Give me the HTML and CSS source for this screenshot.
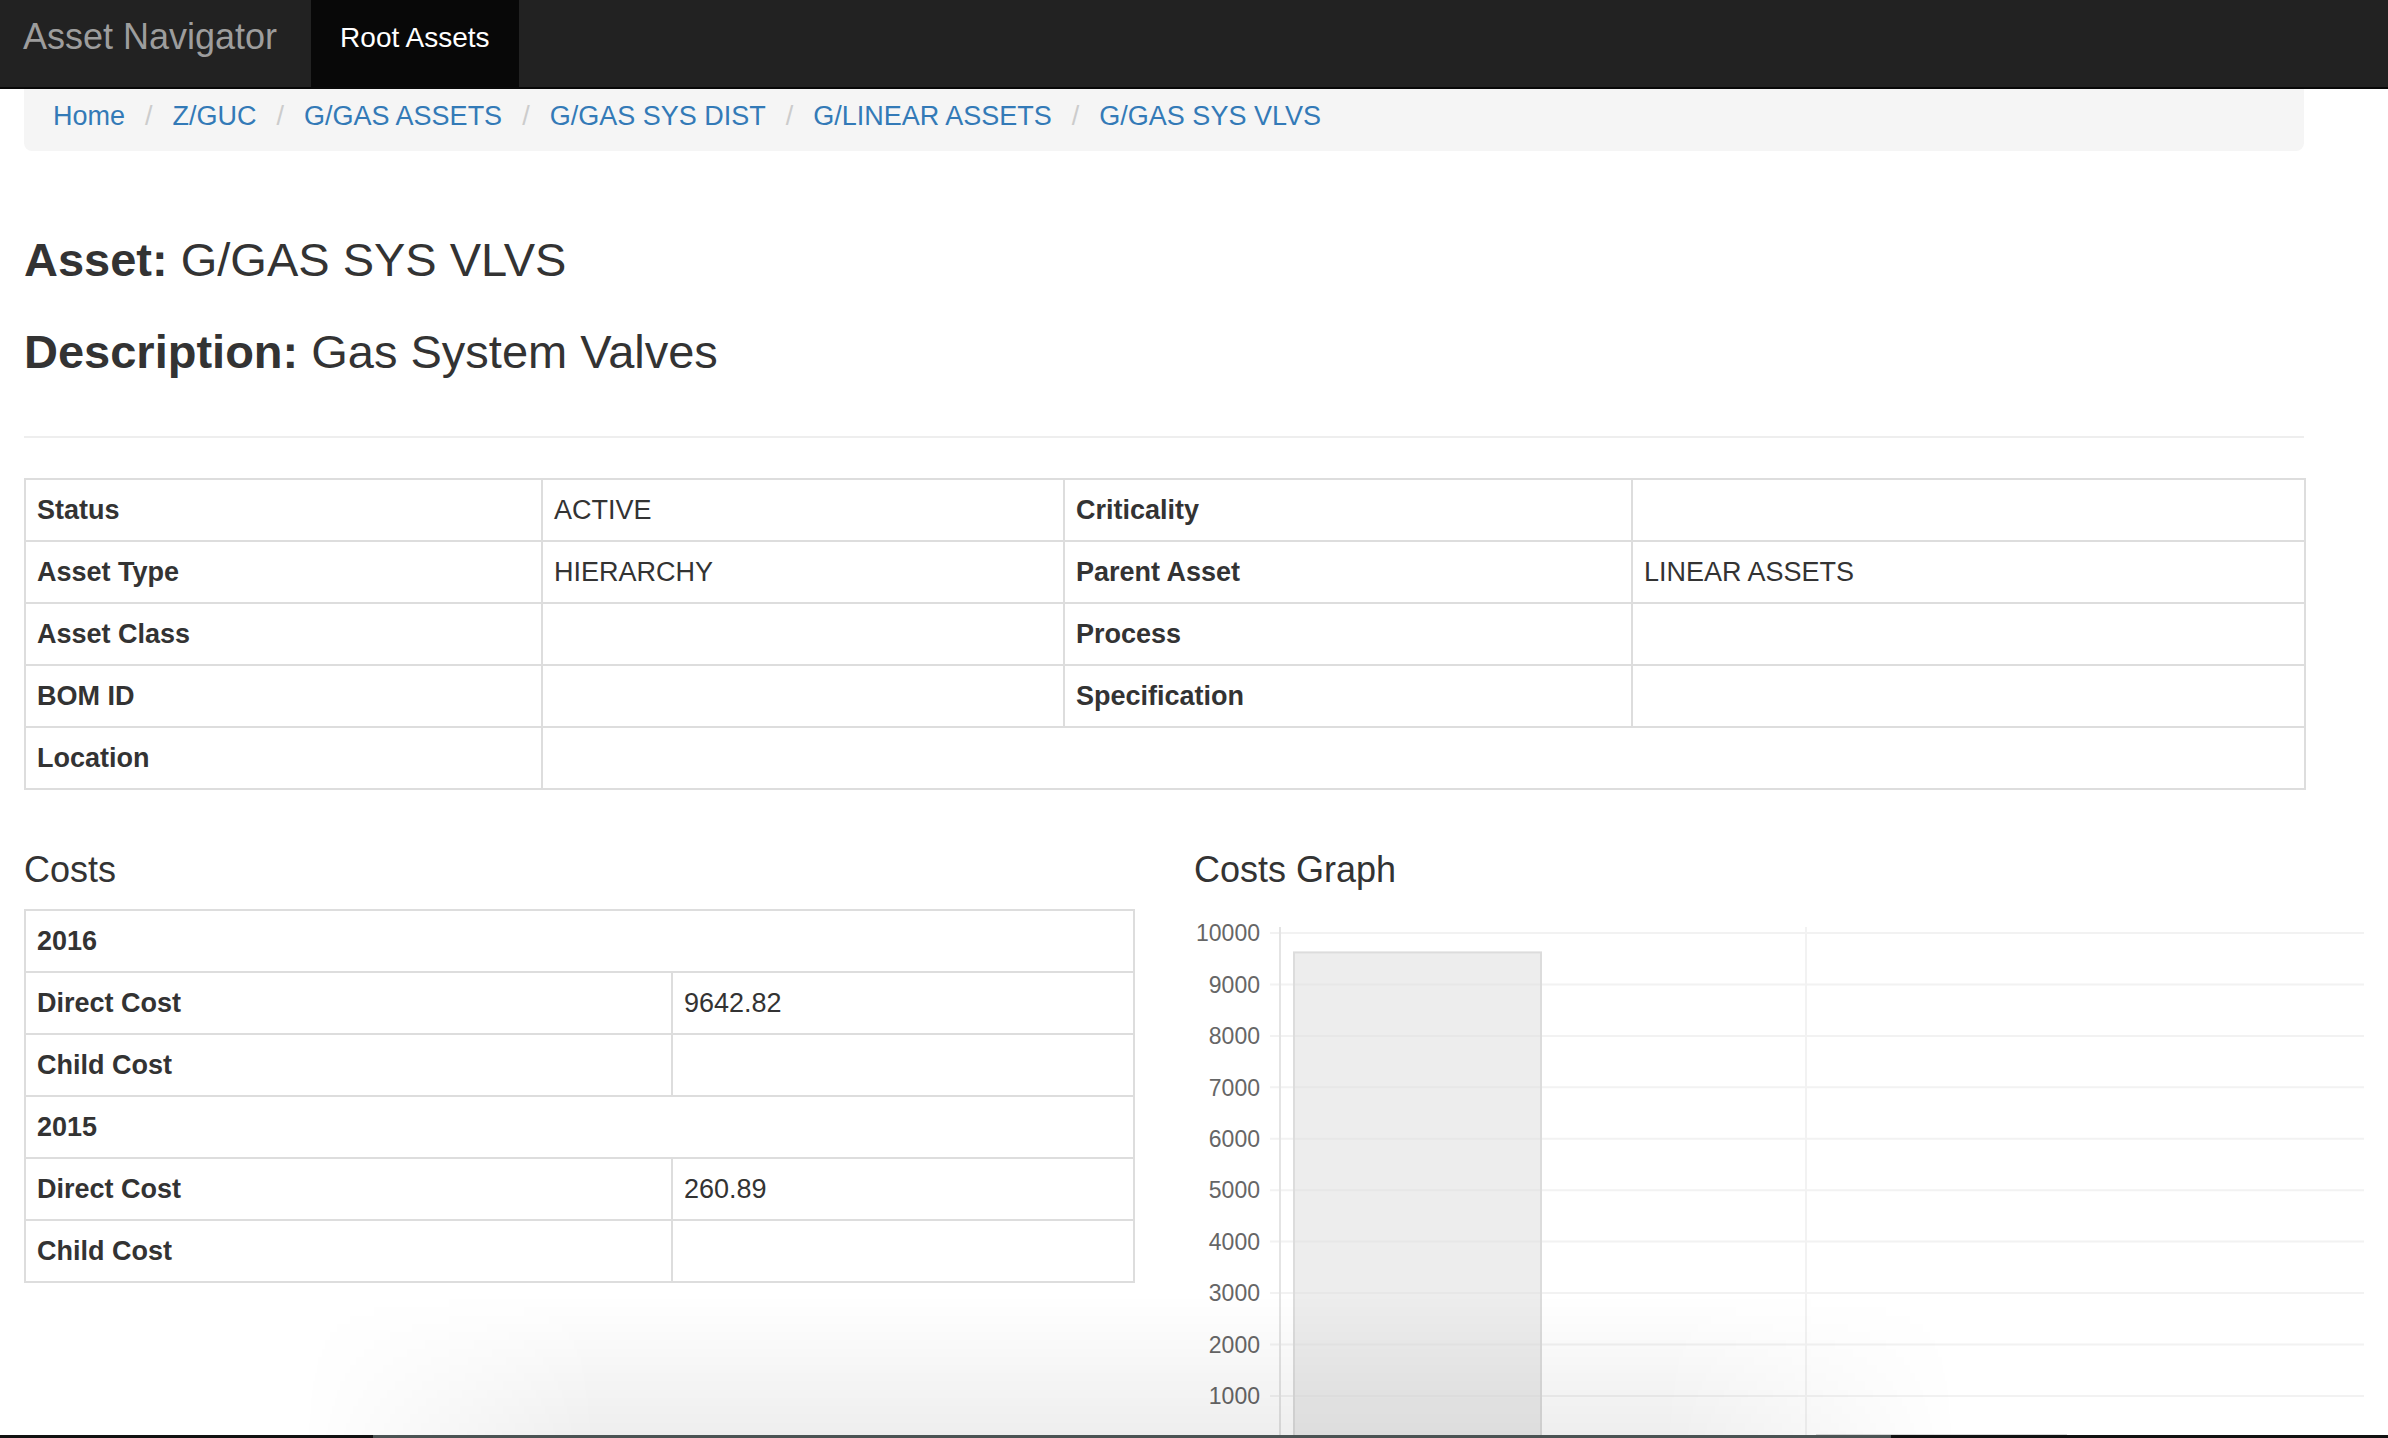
FILE: index.html
```html
<!DOCTYPE html>
<html lang="en">
<head>
<meta charset="utf-8">
<title>Asset Navigator</title>
<link rel="stylesheet" href="styles.css">
</head>
<body>
<nav class="navbar">
  <a class="brand" href="#">Asset Navigator</a>
  <a class="nav-link active" href="#">Root Assets</a>
</nav>
<div class="container">
  <ol class="breadcrumb">
    <li><a href="#">Home</a></li>
    <li><a href="#">Z/GUC</a></li>
    <li><a href="#">G/GAS ASSETS</a></li>
    <li><a href="#">G/GAS SYS DIST</a></li>
    <li><a href="#">G/LINEAR ASSETS</a></li>
    <li><a href="#">G/GAS SYS VLVS</a></li>
  </ol>

  <h3 class="heading heading-asset"><b>Asset:</b> G/GAS SYS VLVS</h3>
  <h3 class="heading heading-desc"><b>Description:</b> Gas System Valves</h3>
  <hr class="divider">

  <table class="grid-table info-table">
    <colgroup>
      <col class="c1"><col class="c2"><col class="c3"><col class="c4">
    </colgroup>
    <tbody>
      <tr><th>Status</th><td>ACTIVE</td><th>Criticality</th><td></td></tr>
      <tr><th>Asset Type</th><td>HIERARCHY</td><th>Parent Asset</th><td>LINEAR ASSETS</td></tr>
      <tr><th>Asset Class</th><td></td><th>Process</th><td></td></tr>
      <tr><th>BOM ID</th><td></td><th>Specification</th><td></td></tr>
      <tr><th>Location</th><td colspan="3"></td></tr>
    </tbody>
  </table>

  <div class="costs-row">
    <section class="costs-col">
      <h4 class="section-title">Costs</h4>
      <table class="grid-table costs-table">
        <colgroup><col class="k1"><col class="k2"></colgroup>
        <tbody>
          <tr><th colspan="2">2016</th></tr>
          <tr><th>Direct Cost</th><td>9642.82</td></tr>
          <tr><th>Child Cost</th><td></td></tr>
          <tr><th colspan="2">2015</th></tr>
          <tr><th>Direct Cost</th><td>260.89</td></tr>
          <tr><th>Child Cost</th><td></td></tr>
        </tbody>
      </table>
    </section>
    <section class="graph-col">
      <h4 class="section-title">Costs Graph</h4>
      <svg class="chart" width="1170" height="560" viewBox="0 0 1170 560">
        <g class="gridlines">
          <line x1="76" y1="22" x2="1170" y2="22"/>
          <line x1="76" y1="73.4" x2="1170" y2="73.4"/>
          <line x1="76" y1="124.9" x2="1170" y2="124.9"/>
          <line x1="76" y1="176.3" x2="1170" y2="176.3"/>
          <line x1="76" y1="227.8" x2="1170" y2="227.8"/>
          <line x1="76" y1="279.2" x2="1170" y2="279.2"/>
          <line x1="76" y1="330.6" x2="1170" y2="330.6"/>
          <line x1="76" y1="382.1" x2="1170" y2="382.1"/>
          <line x1="76" y1="433.5" x2="1170" y2="433.5"/>
          <line x1="76" y1="484.9" x2="1170" y2="484.9"/>
          <line x1="76" y1="536.4" x2="1170" y2="536.4"/>
          <line x1="612" y1="16" x2="612" y2="560"/>
        </g>
        <line class="axis" x1="86" y1="16" x2="86" y2="560"/>
        <g class="labels">
          <text x="66" y="30.2">10000</text>
          <text x="66" y="81.6">9000</text>
          <text x="66" y="133.1">8000</text>
          <text x="66" y="184.5">7000</text>
          <text x="66" y="236">6000</text>
          <text x="66" y="287.4">5000</text>
          <text x="66" y="338.8">4000</text>
          <text x="66" y="390.3">3000</text>
          <text x="66" y="441.7">2000</text>
          <text x="66" y="493.1">1000</text>
        </g>
        <rect class="bar" x="100" y="41.4" width="247" height="495"/>
        <rect class="bar" x="623" y="524" width="249" height="12.4"/>
      </svg>
    </section>
  </div>
</div>

<div class="bottom-haze"></div>
<div class="bottom-strip"></div>
</body>
</html>
```

FILE: styles.css
```css
html, body {
  margin: 0;
  padding: 0;
  height: 100%;
  overflow: hidden;
}

body {
  font-family: "Liberation Sans", Arial, Helvetica, sans-serif;
  font-size: 27px;
  line-height: 38px;
  color: #333;
  background: #fff;
}

a {
  text-decoration: none;
}

/* ---------- navbar ---------- */
.navbar {
  display: flex;
  height: 87px;
  background: #222;
  border-bottom: 2px solid #080808;
}

.brand {
  font-size: 36px;
  line-height: 41px;
  padding: 16px 34px 0 23px;
  color: #9d9d9d;
}

.nav-link {
  font-size: 28px;
  line-height: 40px;
  padding: 18px 29px 0;
  color: #fff;
}

.nav-link.active {
  background: #080808;
}

/* ---------- container ---------- */
.container {
  margin-left: 24px;
  width: 2280px;
}

.breadcrumb {
  list-style: none;
  display: flex;
  margin: 0;
  padding: 8px 29px 16px;
  background: #f5f5f5;
  border-radius: 0 0 8px 8px;
}

.breadcrumb li + li::before {
  content: "/";
  padding: 0 20px;
  color: #ccc;
}

.breadcrumb a {
  color: #337ab7;
}

/* ---------- headings ---------- */
.heading {
  font-size: 47px;
  line-height: 51px;
  font-weight: normal;
  margin: 0;
}

.heading b {
  font-weight: bold;
}

.heading-asset {
  margin-top: 83px;
}

.heading-desc {
  margin-top: 41px;
}

.divider {
  height: 0;
  border: 0;
  border-top: 2px solid #eee;
  margin: 59px 0 0;
}

/* ---------- tables ---------- */
.grid-table {
  border-collapse: collapse;
  table-layout: fixed;
}

.grid-table th,
.grid-table td {
  border: 2px solid #ddd;
  padding: 11px;
  line-height: 38px;
  text-align: left;
  vertical-align: top;
  font-weight: normal;
}

.grid-table th {
  font-weight: bold;
}

.info-table {
  width: 2280px;
  margin-top: 40px;
}

.c1 { width: 517px; }
.c2 { width: 522px; }
.c3 { width: 568px; }
.c4 { width: 673px; }

/* ---------- costs ---------- */
.costs-row {
  display: flex;
  gap: 61px;
  margin-top: 60px;
}

.costs-col {
  width: 1109px;
}

.graph-col {
  width: 1110px;
}

.section-title {
  font-size: 36px;
  line-height: 40px;
  font-weight: normal;
  margin: 0;
}

.costs-table {
  width: 1109px;
  margin-top: 19px;
}

.k1 { width: 647px; }
.k2 { width: 462px; }

/* ---------- chart ---------- */
.chart {
  display: block;
  margin-top: 21px;
  overflow: visible;
}

.gridlines line {
  stroke: #f2f2f2;
  stroke-width: 2;
}

.axis {
  stroke: #e4e4e4;
  stroke-width: 2;
}

.labels text {
  font-family: "Liberation Sans", Arial, Helvetica, sans-serif;
  font-size: 23px;
  fill: #666;
  text-anchor: end;
}

.bar {
  fill: rgba(220, 220, 220, 0.5);
  stroke: #dcdcdc;
  stroke-width: 2;
}

/* ---------- bottom screen artefacts (overlay) ---------- */
.bottom-haze {
  position: fixed;
  left: 300px;
  bottom: 3px;
  width: 1660px;
  height: 140px;
  background: linear-gradient(to top, rgba(0, 0, 0, 0.065), rgba(0, 0, 0, 0));
  -webkit-mask-image: linear-gradient(to right, transparent, #000 18%, #000 82%, transparent);
  mask-image: linear-gradient(to right, transparent, #000 18%, #000 82%, transparent);
  pointer-events: none;
}

.bottom-strip {
  position: fixed;
  left: 0;
  right: 0;
  bottom: 0;
  height: 3px;
  background: linear-gradient(to right, #111 0, #111 373px, #4b5353 373px, #4b5353 1891px, #111 1891px);
}
```
